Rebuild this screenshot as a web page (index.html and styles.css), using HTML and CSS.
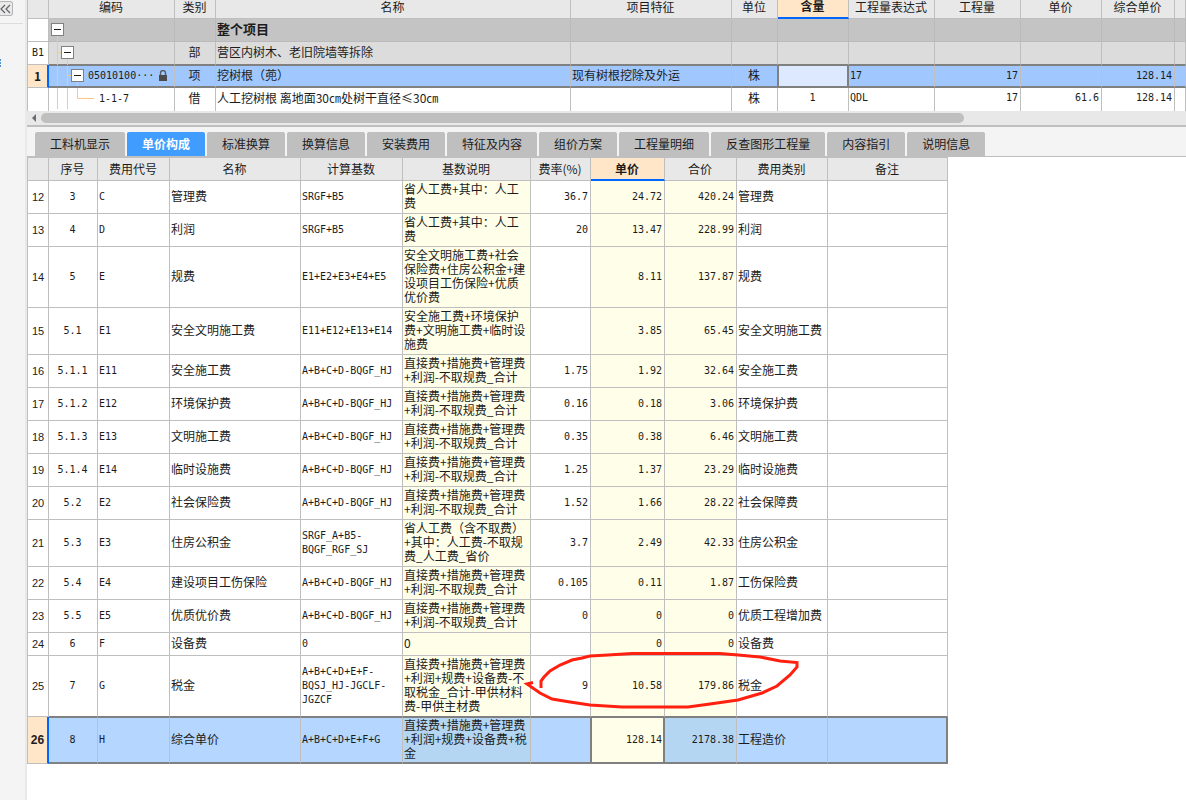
FILE: index.html
```html
<!DOCTYPE html>
<html lang="zh-CN">
<head>
<meta charset="utf-8">
<title>单价构成</title>
<link rel="stylesheet" href="styles.css">
</head>
<body>
<div class="app">
  <aside class="rail">
    <button class="collapse" type="button" aria-label="收起"><svg width="12" height="10" viewBox="0 0 12 10"><path d="M5 1L1 5l4 4M10 1L6 5l4 4" fill="none" stroke="#606468" stroke-width="1.2"/></svg></button>
    <div class="rail-line"></div>
    <svg class="rail-mark" width="2" height="8" viewBox="0 0 2 8"><path d="M0 1h1M0 4h1M0 7h1" stroke="#1673c4" stroke-width="1.4"/></svg>
  </aside>
  <main class="main">
    <table class="grid items">
      <colgroup><col class="w22"><col class="w126"><col class="w41"><col class="w355"><col class="w161"><col class="w46"><col class="w71"><col class="w86"><col class="w86"><col class="w81"><col class="w73"><col></colgroup>
      <thead>
        <tr><th></th><th>编码</th><th>类别</th><th>名称</th><th>项目特征</th><th>单位</th><th class="current">含量</th><th>工程量表达式</th><th>工程量</th><th>单价</th><th>综合单价</th><th></th></tr>
      </thead>
      <tbody>
        <tr class="project">
          <td></td>
          <td class="tree"><svg class="guide" width="50" height="23"><path d="M8.500 17V23"/></svg><button class="toggle level-0" type="button" aria-label="折叠"></button></td>
          <td></td><td>整个项目</td><td></td><td></td><td></td><td></td><td></td><td></td><td></td><td></td>
        </tr>
        <tr class="section">
          <td class="mono">B1</td>
          <td class="tree"><svg class="guide" width="50" height="23"><path d="M8.500 0V23M8 10.500H12M18.500 17V23"/></svg><button class="toggle level-1" type="button" aria-label="折叠"></button></td>
          <td>部</td><td>营区内树木、老旧院墙等拆除</td><td></td><td></td><td></td><td></td><td></td><td></td><td></td><td></td>
        </tr>
        <tr class="selected">
          <td>1</td>
          <td class="tree"><svg class="guide" width="50" height="20"><path d="M8.500 0V20M18.500 0V20M18 9.500H22M28.500 16V20"/></svg><div class="code"><button class="toggle level-2" type="button" aria-label="折叠"></button><span class="mono">05010100···</span><svg class="lock" width="8" height="11" viewBox="0 0 8 11"><path d="M1.500 5V3a2.500 2.500 0 0 1 5 0v2" fill="none" stroke="#555b66" stroke-width="1.400"/><path d="M0 5h8v6H0z" fill="#4b4b4b"/></svg></div></td>
          <td>项</td><td>挖树根（蔸）</td><td>现有树根挖除及外运</td><td>株</td><td class="editing"></td><td class="mono">17</td><td class="mono">17</td><td></td><td class="mono">128.14</td><td></td>
        </tr>
        <tr class="quota">
          <td></td>
          <td class="tree"><svg class="guide" width="50" height="23"><path d="M8.500 0V21M18.500 0V21M28.500 0V10.500H45"/></svg><span class="mono leaf">1-1-7</span></td>
          <td>借</td><td>人工挖树根 离地面30㎝处树干直径≤30㎝</td><td></td><td>株</td><td class="mono">1</td><td class="mono">QDL</td><td class="mono">17</td><td class="mono">61.6</td><td class="mono">128.14</td><td></td>
        </tr>
      </tbody>
    </table>
    <div class="scrollbar"><svg width="14" height="14" viewBox="0 0 14 14"><path d="M9 3v8L5 7z" fill="#6b6b73"/></svg><div class="track"><div class="thumb"></div></div></div>
    <nav class="tabs">
      <button type="button">工料机显示</button><button type="button" class="active">单价构成</button><button type="button">标准换算</button><button type="button">换算信息</button><button type="button">安装费用</button><button type="button">特征及内容</button><button type="button">组价方案</button><button type="button">工程量明细</button><button type="button">反查图形工程量</button><button type="button">内容指引</button><button type="button">说明信息</button>
    </nav>
    <section class="detail">
      <table class="grid fees">
        <colgroup><col class="w22"><col class="w49"><col class="w72"><col class="w131"><col class="w102"><col class="w128"><col class="w60"><col class="w74"><col class="w72"><col class="w91"><col class="w120"></colgroup>
        <thead>
          <tr><th></th><th>序号</th><th>费用代号</th><th>名称</th><th>计算基数</th><th>基数说明</th><th>费率(%)</th><th class="current">单价</th><th>合价</th><th>费用类别</th><th>备注</th></tr>
        </thead>
        <tbody>
          <tr class="h33"><td>12</td><td>3</td><td>C</td><td>管理费</td><td>SRGF+B5</td><td>省人工费+其中：人工<br>费</td><td>36.7</td><td>24.72</td><td>420.24</td><td>管理费</td><td></td></tr>
          <tr class="h33"><td>13</td><td>4</td><td>D</td><td>利润</td><td>SRGF+B5</td><td>省人工费+其中：人工<br>费</td><td>20</td><td>13.47</td><td>228.99</td><td>利润</td><td></td></tr>
          <tr class="h61"><td>14</td><td>5</td><td>E</td><td>规费</td><td>E1+E2+E3+E4+E5</td><td>安全文明施工费+社会<br>保险费+住房公积金+建<br>设项目工伤保险+优质<br>优价费</td><td></td><td>8.11</td><td>137.87</td><td>规费</td><td></td></tr>
          <tr class="h47"><td>15</td><td>5.1</td><td>E1</td><td>安全文明施工费</td><td>E11+E12+E13+E14</td><td>安全施工费+环境保护<br>费+文明施工费+临时设<br>施费</td><td></td><td>3.85</td><td>65.45</td><td>安全文明施工费</td><td></td></tr>
          <tr class="h33"><td>16</td><td>5.1.1</td><td>E11</td><td>安全施工费</td><td>A+B+C+D-BQGF_HJ</td><td>直接费+措施费+管理费<br>+利润-不取规费_合计</td><td>1.75</td><td>1.92</td><td>32.64</td><td>安全施工费</td><td></td></tr>
          <tr class="h33"><td>17</td><td>5.1.2</td><td>E12</td><td>环境保护费</td><td>A+B+C+D-BQGF_HJ</td><td>直接费+措施费+管理费<br>+利润-不取规费_合计</td><td>0.16</td><td>0.18</td><td>3.06</td><td>环境保护费</td><td></td></tr>
          <tr class="h33"><td>18</td><td>5.1.3</td><td>E13</td><td>文明施工费</td><td>A+B+C+D-BQGF_HJ</td><td>直接费+措施费+管理费<br>+利润-不取规费_合计</td><td>0.35</td><td>0.38</td><td>6.46</td><td>文明施工费</td><td></td></tr>
          <tr class="h33"><td>19</td><td>5.1.4</td><td>E14</td><td>临时设施费</td><td>A+B+C+D-BQGF_HJ</td><td>直接费+措施费+管理费<br>+利润-不取规费_合计</td><td>1.25</td><td>1.37</td><td>23.29</td><td>临时设施费</td><td></td></tr>
          <tr class="h33"><td>20</td><td>5.2</td><td>E2</td><td>社会保险费</td><td>A+B+C+D-BQGF_HJ</td><td>直接费+措施费+管理费<br>+利润-不取规费_合计</td><td>1.52</td><td>1.66</td><td>28.22</td><td>社会保障费</td><td></td></tr>
          <tr class="h47"><td>21</td><td>5.3</td><td>E3</td><td>住房公积金</td><td>SRGF_A+B5-<br>BQGF_RGF_SJ</td><td>省人工费（含不取费）<br>+其中：人工费-不取规<br>费_人工费_省价</td><td>3.7</td><td>2.49</td><td>42.33</td><td>住房公积金</td><td></td></tr>
          <tr class="h33"><td>22</td><td>5.4</td><td>E4</td><td>建设项目工伤保险</td><td>A+B+C+D-BQGF_HJ</td><td>直接费+措施费+管理费<br>+利润-不取规费_合计</td><td>0.105</td><td>0.11</td><td>1.87</td><td>工伤保险费</td><td></td></tr>
          <tr class="h33"><td>23</td><td>5.5</td><td>E5</td><td>优质优价费</td><td>A+B+C+D-BQGF_HJ</td><td>直接费+措施费+管理费<br>+利润-不取规费_合计</td><td>0</td><td>0</td><td>0</td><td>优质工程增加费</td><td></td></tr>
          <tr class="h23"><td>24</td><td>6</td><td>F</td><td>设备费</td><td>0</td><td>0</td><td></td><td>0</td><td>0</td><td>设备费</td><td></td></tr>
          <tr class="h61 before-selected"><td>25</td><td>7</td><td>G</td><td>税金</td><td>A+B+C+D+E+F-<br>BQSJ_HJ-JGCLF-<br>JGZCF</td><td>直接费+措施费+管理费<br>+利润+规费+设备费-不<br>取税金_合计-甲供材料<br>费-甲供主材费</td><td>9</td><td>10.58</td><td>179.86</td><td>税金</td><td></td></tr>
          <tr class="h47 selected"><td>26</td><td>8</td><td>H</td><td>综合单价</td><td>A+B+C+D+E+F+G</td><td>直接费+措施费+管理费<br>+利润+规费+设备费+税<br>金</td><td></td><td class="editing">128.14</td><td>2178.38</td><td>工程造价</td><td></td></tr>
        </tbody>
      </table>
      <svg class="markup" width="280" height="64" viewBox="520 650 280 64"><path d="M541 688V681L544 677L550 671L560 665L572 660L582 658L590 656L608 655L632 653.500H720L738 655L760 657L780 661L797 662.500V667L790 675L777 686L762 693L738 700L710 704L688 707H622L590 705L570 702L552 699L540 693L527 684L533 682.500" fill="none" stroke="#ff2010" stroke-width="3"/></svg>
    </section>
  </main>
</div>
</body>
</html>
```
FILE: styles.css
```css
* {
  box-sizing: border-box;
}

body {
  margin: 0;
  background: #fff;
  color: #1c1c1c;
  font: 12px/14px "Noto Sans CJK SC", sans-serif;
}

button {
  font: inherit;
  color: inherit;
  border: 0;
  padding: 0;
  margin: 0;
}

.app {
  display: flex;
  min-height: 100vh;
}

.rail {
  flex: 0 0 27px;
  background: #f4f4f4;
  border-right: 2px solid #e9e9e9;
  padding-top: 1px;
}

.collapse {
  display: flex;
  align-items: center;
  width: 13px;
  height: 15px;
  background: #e9e9e9;
  border: 1px solid #b4b4b4;
  border-left: 0;
  border-radius: 0 3px 3px 0;
}

.rail-line {
  height: 1px;
  width: 23px;
  margin-top: 7px;
  background: #dcdcdc;
}

.rail-mark {
  display: block;
  margin-top: 35px;
}

.main {
  flex: 1;
  min-width: 0;
}

.grid {
  border-collapse: separate;
  border-spacing: 0;
  table-layout: fixed;
}

.items {
  width: 100%;
}

.fees {
  width: 921px;
}

.w22 { width: 22px; }
.w41 { width: 41px; }
.w46 { width: 46px; }
.w49 { width: 49px; }
.w60 { width: 60px; }
.w71 { width: 71px; }
.w72 { width: 72px; }
.w73 { width: 73px; }
.w74 { width: 74px; }
.w81 { width: 81px; }
.w86 { width: 86px; }
.w91 { width: 91px; }
.w102 { width: 102px; }
.w120 { width: 120px; }
.w126 { width: 126px; }
.w128 { width: 128px; }
.w131 { width: 131px; }
.w161 { width: 161px; }
.w355 { width: 355px; }

.grid th,
.grid td {
  padding: 0 2px 0 1px;
  border: 0 solid #bfbfbf;
  border-width: 0 1px 1px 0;
  white-space: nowrap;
}

.grid td {
  padding-bottom: 2px;
}

.grid th:first-child,
.grid td:first-child {
  border-left-width: 1px;
  padding: 0;
  text-align: center;
}

.grid th {
  background: #e8e8e8;
  font-weight: 400;
  text-align: center;
}

.grid th.current {
  background: #ffe6c8;
  border-bottom: 2px solid #0066ff;
  font-weight: 700;
}

.mono,
.fees td:nth-child(2),
.fees td:nth-child(3),
.fees td:nth-child(5),
.fees td:nth-child(7),
.fees td:nth-child(8),
.fees td:nth-child(9) {
  font-family: "DejaVu Sans Mono", monospace;
  font-size: 10px;
}

.items td.mono,
.fees td:nth-child(2),
.fees td:nth-child(3),
.fees td:nth-child(5),
.fees td:nth-child(7),
.fees td:nth-child(8),
.fees td:nth-child(9) {
  padding-bottom: 0;
}

.items th {
  height: 19px;
  line-height: 12px;
  padding-bottom: 5px;
}

.items tbody tr {
  height: 23px;
}

.items td:nth-child(3),
.items td:nth-child(6),
.items td:nth-child(7) {
  text-align: center;
}

.items td:nth-child(n+9) {
  text-align: right;
}

.items .project td {
  background: #c4c4c4;
  border-color: #bababa;
  font-size: 13px;
  font-weight: 700;
}

.items .section td {
  background: #dcdcdc;
  border-bottom-color: #808080;
}

.items .project td:first-child,
.items .section td:first-child {
  background: #fff;
  border-color: #bfbfbf;
}

.items .selected td {
  background: #a0c8ff;
  border-top: 1px solid #808080;
  border-bottom: 2px solid #808080;
}

.grid .selected td:first-child {
  background: #ffe6c8;
  border-top: 0;
  border-bottom: 1px solid #bfbfbf;
  border-right: 2px solid #0066ff;
  font-weight: 700;
}

.items .selected td:nth-child(6) {
  border-right-color: #808080;
}

.items .selected .editing {
  background: #dce9ff;
  border-left: 1px solid #808080;
  border-right: 2px solid #808080;
}

.items .quota td {
  border-bottom: 0;
  padding-bottom: 3px;
}

.items .tree {
  position: relative;
  padding: 0 0 1px;
}

.guide {
  position: absolute;
  left: 0;
  top: 0;
  fill: none;
  stroke: #ffc680;
}

.code {
  display: flex;
  align-items: center;
}

.code .mono {
  margin-left: 4px;
}

.lock {
  margin-left: 5px;
}

.toggle {
  display: block;
  position: relative;
  width: 13px;
  height: 13px;
  border: 1px solid #808080;
  background: linear-gradient(#1c1c1c, #1c1c1c) center / 7px 1px no-repeat #fff;
}

.level-0 { margin-left: 2px; }
.level-1 { margin-left: 12px; }
.level-2 { margin-left: 22px; }
.leaf { margin-left: 50px; }

.scrollbar {
  display: flex;
  height: 16px;
  padding-bottom: 2px;
  background: #e8e8e8;
  border-bottom: 2px solid #bfbfbf;
}

.track {
  flex: 1;
  padding-top: 2px;
}

.thumb {
  width: 80.6%;
  height: 10px;
  border-radius: 5px;
  background: #bfbfbf;
}

.tabs {
  display: flex;
  gap: 2px;
  padding: 5px 0 0 8px;
  background: #f4f4f4;
  border-bottom: 1px solid #bfbfbf;
}

.tabs button {
  height: 24px;
  padding: 0 15px;
  background: #bfbfbf;
  border-radius: 2px 2px 0 0;
  white-space: nowrap;
}

.tabs .active {
  background: #409cff;
  color: #fff;
  font-weight: 700;
}

.detail {
  position: relative;
}

.fees th {
  height: 24px;
  border-top-width: 1px;
}

.h23 { height: 23px; }
.h33 { height: 33px; }
.h47 { height: 47px; }
.h61 { height: 61px; }

.fees td:nth-child(1) {
  font-family: "Liberation Sans", sans-serif;
  font-size: 11px;
}

.fees td:nth-child(2) {
  text-align: center;
}

.fees td:nth-child(6),
.fees td:nth-child(8),
.fees td:nth-child(9) {
  background: #ffffe9;
}

.fees td:nth-child(7),
.fees td:nth-child(8),
.fees td:nth-child(9) {
  text-align: right;
}

.fees .before-selected td:nth-child(n+2) {
  border-bottom-color: #808080;
}

.fees .selected td {
  background: #b4d6ff;
  border-top: 1px solid #808080;
  border-bottom: 2px solid #808080;
}

.fees .selected td:first-child {
  font-size: 12px;
}

.fees .selected td:nth-child(6),
.fees .selected td:nth-child(9) {
  background: #b4d6f3;
}

.fees .selected td:nth-child(7) {
  border-right-color: #808080;
}

.fees .selected td:last-child {
  border-right: 2px solid #808080;
}

.fees .selected .editing {
  background: #ffffe9;
  border-left: 1px solid #808080;
  border-right: 2px solid #808080;
  padding-right: 1px;
}

.markup {
  position: absolute;
  left: 493px;
  top: 493px;
  pointer-events: none;
}
```
